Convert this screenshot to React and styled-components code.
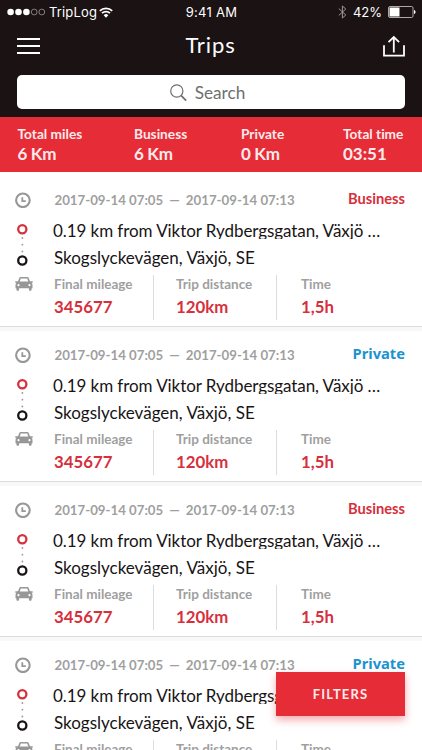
import React from "react";
import styled, { createGlobalStyle } from "styled-components";

const colors = {
  dark: "#1b1213",
  red: "#e62d37",
  value: "#d6303c",
  blue: "#1b93d0",
  grey: "#979797",
  line: "#dcdcdc",
};

const totals = [
  { label: "Total miles", value: "6 Km" },
  { label: "Business", value: "6 Km" },
  { label: "Private", value: "0 Km" },
  { label: "Total time", value: "03:51" },
];

const trips = [
  { id: 1, type: "Business" },
  { id: 2, type: "Private" },
  { id: 3, type: "Business" },
  { id: 4, type: "Private" },
];

export default function App() {
  return (
    <>
      <GlobalStyle />
      <Screen>
        <Header>
          <StatusBar />
          <NavBar>
            <MenuIcon />
            <Heading>Trips</Heading>
            <ShareIcon />
          </NavBar>
          <SearchBox>
            <SearchIcon />
            Search
          </SearchBox>
        </Header>
        <Totals>
          {totals.map(({ label, value }) => (
            <div key={label}>
              <TotalLabel>{label}</TotalLabel>
              <TotalValue>{value}</TotalValue>
            </div>
          ))}
        </Totals>
        {trips.map((trip) => (
          <Trip key={trip.id} type={trip.type} />
        ))}
        <FilterButton>FILTERS</FilterButton>
      </Screen>
    </>
  );
}

function StatusBar() {
  return (
    <Status>
      <Carrier>
        <svg width="39" height="8" viewBox="0 0 39 8">
          {[3.6, 11.5, 19.4].map((x) => (
            <circle key={x} cx={x} cy="4" r="3.3" fill="#fff" />
          ))}
          {[27.2, 34.8].map((x) => (
            <circle key={x} cx={x} cy="4" r="2.9" fill="none" stroke="#aaa" strokeWidth="0.7" />
          ))}
        </svg>
        <CarrierName>TripLog</CarrierName>
        <svg width="14" height="11" viewBox="0 0 14 11" fill="none" stroke="#fff" strokeWidth="1.7">
          <path d="M0.8 3.9a8.8 8.8 0 0 1 12.4 0M3 6.2a5.7 5.7 0 0 1 8 0" />
          <path d="M7 10.7L4.7 8.2a3.3 3.3 0 0 1 4.6 0z" fill="#fff" stroke="none" />
        </svg>
      </Carrier>
      <Clock>9:41 AM</Clock>
      <Power>
        <svg width="9" height="14" viewBox="0 0 9 14" fill="none" stroke="#999" strokeWidth="1">
          <path d="M0.8 3.6l7 6.4-3.4 3V1l3.4 3-7 6.4" />
        </svg>
        <Percent>42%</Percent>
        <svg width="28" height="12" viewBox="0 0 28 12">
          <rect x="0.5" y="0.5" width="24.5" height="11" rx="1.5" fill="none" stroke="#aaa" />
          <rect x="1.5" y="1.5" width="10" height="9" fill="#fff" />
          <path d="M26 4c2 .6 2 3.4 0 4z" fill="#fff" />
        </svg>
      </Power>
    </Status>
  );
}

function Trip({ type }) {
  return (
    <TripCard>
      <TripHead>
        <ClockIcon />
        <Dates>
          <span>2017-09-14 07:05</span>
          <span>—</span>
          <span>2017-09-14 07:13</span>
        </Dates>
        <Tag type={type}>{type}</Tag>
      </TripHead>
      <Route>
        <RouteIcon />
        <Places>
          <Place $first>0.19 km from Viktor Rydbergsgatan, Växjö …</Place>
          <Place>Skogslyckevägen, Växjö, SE</Place>
        </Places>
      </Route>
      <Details>
        <CarIcon />
        <Detail>
          <DetailLabel>Final mileage</DetailLabel>
          <DetailValue>345677</DetailValue>
        </Detail>
        <Detail $divider="22px">
          <DetailLabel>Trip distance</DetailLabel>
          <DetailValue>120km</DetailValue>
        </Detail>
        <Detail $divider="24px">
          <DetailLabel>Time</DetailLabel>
          <DetailValue>1,5h</DetailValue>
        </Detail>
      </Details>
    </TripCard>
  );
}

const MenuIcon = () => (
  <svg width="24" height="18" viewBox="0 0 24 18" stroke="#fff" strokeWidth="2">
    <path d="M0 2h23M0 9h23M0 16h23" />
  </svg>
);

const ShareIcon = () => (
  <svg width="22" height="22" viewBox="0 0 22 22" fill="none" stroke="#fff" strokeWidth="1.8">
    <path d="M1 10.3v10.4h20V10.3M10.8 17.4V2.500M5.500 7.100l5.300-5 5.300 5" />
  </svg>
);

const SearchIcon = () => (
  <svg width="17" height="18" viewBox="0 0 17 18" fill="none" stroke="#6f6f6f" strokeWidth="1.2">
    <circle cx="6.8" cy="8" r="6.1" />
    <path d="M11.2 12.6l5 5" strokeWidth="1.8" />
  </svg>
);

const ClockIcon = () => (
  <svg width="16" height="16" viewBox="0 0 16 16" fill="none" stroke={colors.grey}>
    <circle cx="7.9" cy="8.3" r="6.8" strokeWidth="2.1" />
    <path d="M7.3 5.2v4h3.5" strokeWidth="1.8" />
  </svg>
);

const RouteIcon = () => (
  <svg width="16" height="46" viewBox="0 0 16 46">
    <circle cx="7.3" cy="9.3" r="4.1" fill="none" stroke="#d6303c" strokeWidth="2.3" />
    {[18, 24.7, 31.5].map((y) => (
      <circle key={y} cx="7.4" cy={y} r="0.9" fill="#999" />
    ))}
    <circle cx="7.3" cy="40.5" r="4.1" fill="none" stroke="#181415" strokeWidth="2.3" />
  </svg>
);

const CarIcon = () => (
  <svg width="18" height="17" viewBox="0 -2 18 17">
    <path
      d="M4.4.8C4.7.3 5.1 0 5.7 0h6.6c.6 0 1 .3 1.3.8L15 4.3h2.3c.8 0 .8 1.3 0 1.4l-.8.1c.7.6 1 1.2 1 2V11.3h-.9v1.5c0 1.3-2.7 1.3-2.7 0v-1.5H4.1v1.5c0 1.3-2.7 1.3-2.7 0v-1.5H.5V7.8c0-.8.3-1.4 1-2l-.8-.1c-.8-.1-.8-1.4 0-1.4H3z"
      fill={colors.grey}
    />
    <path d="M5.8 1.5h6.4l1.1 3.1H4.7z" fill="#fff" />
    <circle cx="3.5" cy="8.2" r="1.1" fill="#fff" />
    <circle cx="14.5" cy="8.2" r="1.1" fill="#fff" />
  </svg>
);

const GlobalStyle = createGlobalStyle`
  * {
    box-sizing: border-box;
  }
  body {
    margin: 0;
    font-family: Lato, "Liberation Sans", sans-serif;
    font-variant-ligatures: none;
  }
  svg {
    display: block;
    flex: none;
  }
`;

const Screen = styled.div`
  position: relative;
  width: 422px;
  height: 750px;
  overflow: hidden;
  background: #fff;
`;

const Header = styled.header`
  height: 117px;
  background: ${colors.dark};
  color: #fff;
`;

const Status = styled.div`
  display: grid;
  grid-template-columns: 1fr auto 1fr;
  align-items: center;
  height: 24px;
  padding: 0 6px 0 7px;
  font-family: Inter, "Liberation Sans", sans-serif;
  font-size: 13px;
`;

const Carrier = styled.div`
  display: flex;
  align-items: center;
`;

const CarrierName = styled.span`
  margin: 0 2px 0 3px;
  letter-spacing: 0.15px;
`;

const Clock = styled.div`
  letter-spacing: 0.25px;
`;

const Power = styled.div`
  display: flex;
  justify-content: flex-end;
  align-items: center;
`;

const Percent = styled.span`
  margin: 0 6px 0 6px;
`;

const NavBar = styled.nav`
  display: flex;
  justify-content: space-between;
  align-items: center;
  height: 44px;
  padding: 0 17px;
`;

const Heading = styled.h1`
  margin: 0 3px 3px 0;
  font-size: 22px;
  font-weight: 400;
  letter-spacing: 0.9px;
`;

const SearchBox = styled.div`
  display: flex;
  justify-content: center;
  align-items: center;
  gap: 8px;
  height: 34px;
  margin: 7px 17px 0;
  padding-right: 7px;
  border-radius: 5px;
  background: #fff;
  color: #6f6f6f;
  font-size: 17.2px;
`;

const Totals = styled.section`
  display: grid;
  grid-template-columns: 116.5px 107px 102px 1fr;
  height: 55px;
  padding: 7px 0 0 17.5px;
  background: ${colors.red};
  color: #fdeaec;
  font-weight: 700;
`;

const TotalLabel = styled.div`
  font-size: 13.7px;
  line-height: 19px;
`;

const TotalValue = styled.div`
  font-size: 17px;
  line-height: 21px;
  word-spacing: -0.8px;
`;

const TripCard = styled.article`
  height: 155px;
  padding: 15px 17px 0 15px;
  border-top: 4px solid #f8f8f8;
  border-bottom: 1px solid ${colors.line};

  ${Totals} + & {
    border-top-color: #fff;
  }
`;

const TripHead = styled.div`
  display: flex;
  align-items: center;
  height: 18px;
`;

const Dates = styled.div`
  display: flex;
  gap: 6px;
  margin-left: 23.5px;
  color: #9f9f9f;
  font-size: 13.25px;
  font-weight: 700;
  line-height: 18px;
`;

const Tag = styled.div`
  margin-left: auto;
  padding-bottom: 4px;
  color: ${({ type }) => (type === "Private" ? colors.blue : colors.value)};
  font-family: ${({ type }) => (type === "Private" ? '"Noto Sans"' : "Lato")}, sans-serif;
  font-size: 14.7px;
  font-weight: 700;
  line-height: 18px;
`;

const Route = styled.div`
  display: flex;
  height: 46px;
  margin-top: 11px;
`;

const Places = styled.div`
  display: grid;
  align-content: start;
  row-gap: 8px;
  margin-left: 22px;
`;

const Place = styled.div`
  padding-left: ${({ $first }) => ($first ? "0" : "1px")};
  overflow: ${({ $first }) => ($first ? "hidden" : "visible")};
  color: #181415;
  font-size: 17px;
  letter-spacing: ${({ $first }) => ($first ? "-0.07px" : "0")};
  line-height: 21px;
  height: 19px;
  white-space: nowrap;
`;

const Details = styled.div`
  display: grid;
  grid-template-columns: 39px 99px 123px 1fr;
  height: 45px;
  margin-top: 9px;
`;

const Detail = styled.div`
  padding-left: ${({ $divider }) => $divider || "0"};
  border-left: ${({ $divider }) => ($divider ? `1px solid ${colors.line}` : "none")};
`;

const DetailLabel = styled.div`
  color: #9f9f9f;
  font-size: 13.5px;
  font-weight: 700;
  line-height: 19px;
`;

const DetailValue = styled.div`
  color: ${colors.value};
  font-size: 16.8px;
  font-weight: 700;
  line-height: 25px;
`;

const FilterButton = styled.button`
  position: absolute;
  right: 17px;
  bottom: 34px;
  width: 129px;
  height: 44px;
  border: 0;
  background: ${colors.red};
  box-shadow: 0 4px 8px rgba(230, 45, 55, 0.4);
  color: #fdeaec;
  font-family: Lato, sans-serif;
  font-size: 13px;
  font-weight: 700;
  letter-spacing: 1.1px;
`;
